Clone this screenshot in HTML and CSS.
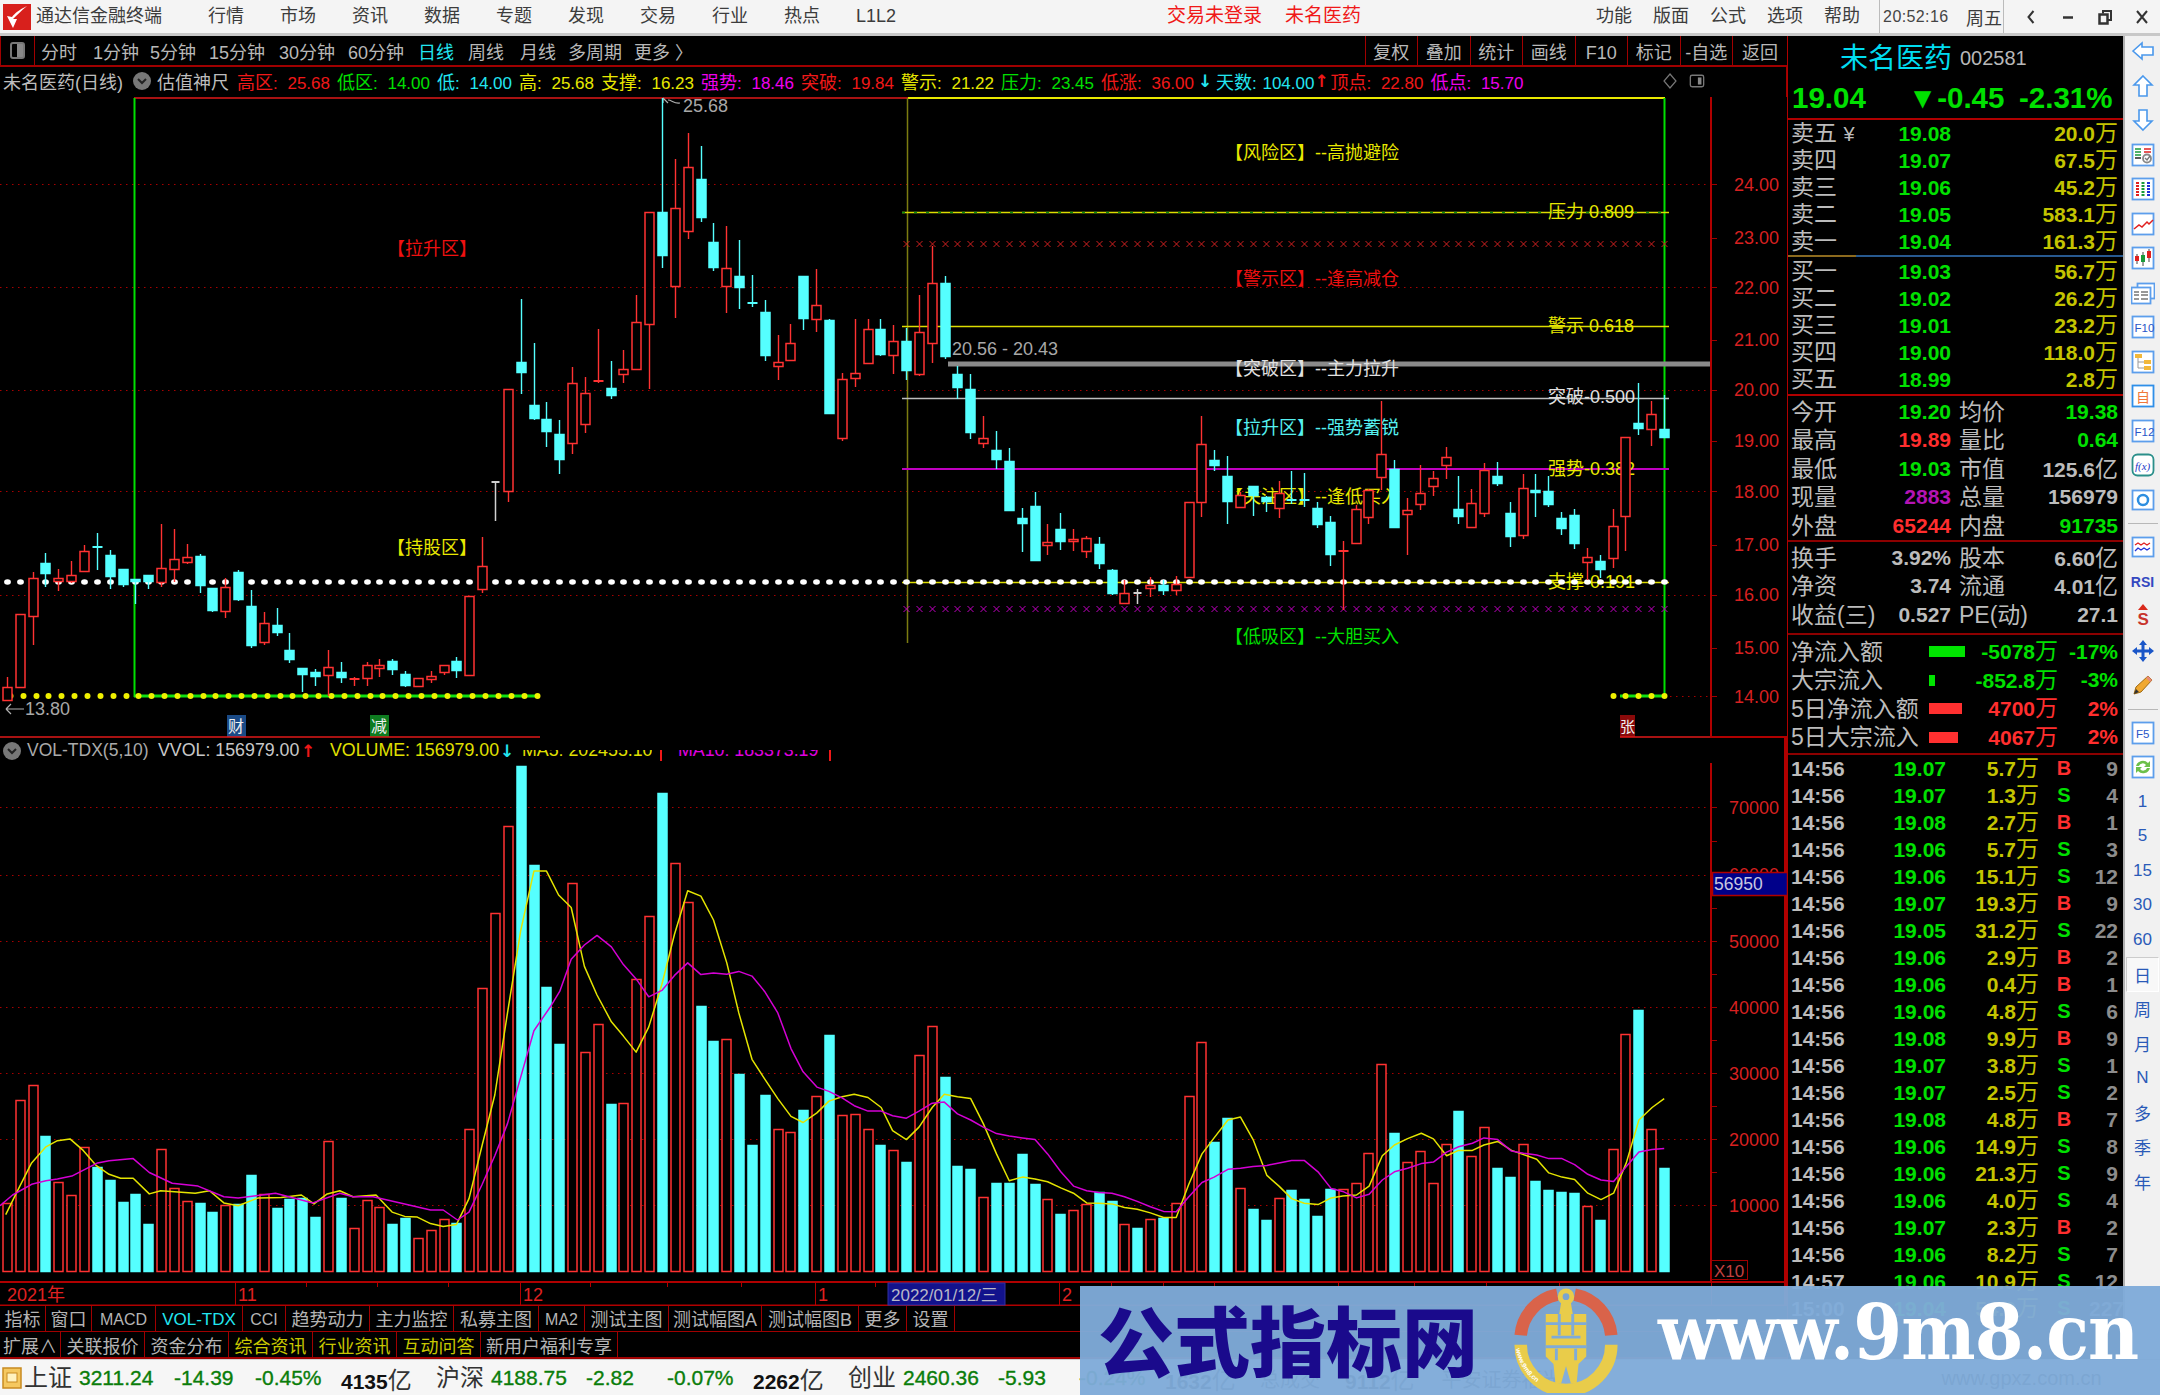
FILE: index.html
```html
<!DOCTYPE html>
<html lang="zh-CN">
<head>
<meta charset="utf-8">
<title>通达信金融终端</title>
<link rel="stylesheet" href="styles.css">
</head>
<body>
<div class="app">
  <header class="titlebar">
    <svg class="logo" viewBox="0 0 28 26"><rect width="28" height="26" fill="#d8201c"/><path d="M24 2 C16 6 12 9 9 13 L4 12 L10 24 L14 15 L10 15 C14 11 18 7 24 2Z" fill="#fff"/></svg>
    <span class="app-name">通达信金融终端</span>
    <nav class="menu">
      <span>行情</span><span>市场</span><span>资讯</span><span>数据</span><span>专题</span><span>发现</span><span>交易</span><span>行业</span><span>热点</span><span>L1L2</span>
    </nav>
    <span class="alert alert-first">交易未登录</span>
    <span class="alert alert-second">未名医药</span>
    <nav class="menu menu-right">
      <span>功能</span><span>版面</span><span>公式</span><span>选项</span><span>帮助</span>
    </nav>
    <div class="clock"><span class="clock-time">20:52:16</span><span>周五</span></div>
    <div class="winctl">
      <svg viewBox="0 0 16 16"><path d="M10.5 2 L5.5 8 L10.5 14" fill="none" stroke="#333" stroke-width="2"/></svg>
      <svg viewBox="0 0 16 16"><path d="M3 8.5 H13" stroke="#333" stroke-width="2.5"/></svg>
      <svg viewBox="0 0 16 16"><path d="M6 4.5 V2 H14 V11 H11" fill="none" stroke="#333" stroke-width="2"/><rect x="2.5" y="5.5" width="8" height="9" fill="none" stroke="#333" stroke-width="2.5"/></svg>
      <svg viewBox="0 0 16 16"><path d="M3 2 L13 14 M13 2 L3 14" stroke="#333" stroke-width="2"/></svg>
    </div>
  </header>

  <div class="workspace">
    <main class="chartcol">
      <div class="toolbar">
        <div class="tb-toggle"><span></span></div>
        <div class="periods">
          <span>分时</span><span>1分钟</span><span>5分钟</span><span>15分钟</span><span>30分钟</span><span>60分钟</span><span class="active">日线</span><span>周线</span><span>月线</span><span>多周期</span><span>更多 〉</span>
        </div>
        <div class="tb-buttons">
          <span>复权</span><span>叠加</span><span>统计</span><span>画线</span><span>F10</span><span>标记</span><span>-自选</span><span>返回</span>
        </div>
      </div>

      <div class="inforow">
        <span class="info-title">未名医药(日线)</span>
        <svg class="chev" viewBox="0 0 18 18"><circle cx="9" cy="9" r="9" fill="#777"/><path d="M5 7 L9 11 L13 7" fill="none" stroke="#222" stroke-width="2"/></svg>
        <span class="info-title info-second">估值神尺</span>
        <span class="stat s-red">高区<i>: 25.68</i></span>
        <span class="stat s-green">低区<i>: 14.00</i></span>
        <span class="stat s-cyan">低<i>: 14.00</i></span>
        <span class="stat s-yellow">高<i>: 25.68</i></span>
        <span class="stat s-yellow">支撑<i>: 16.23</i></span>
        <span class="stat s-magenta">强势<i>: 18.46</i></span>
        <span class="stat s-red">突破<i>: 19.84</i></span>
        <span class="stat s-yellow">警示<i>: 21.22</i></span>
        <span class="stat s-green">压力<i>: 23.45</i></span>
        <span class="stat s-red">低涨<i>: 36.00</i></span>
        <b class="arrow s-cyan">↓</b>
        <span class="stat stat-tight s-cyan">天数<i>: 104.00</i></span>
        <b class="arrow arrow-tight s-red">↑</b>
        <span class="stat s-red">顶点<i>: 22.80</i></span>
        <span class="stat s-magenta">低点<i>: 15.70</i></span>
        <div class="info-tools">
          <svg viewBox="0 0 14 18"><path d="M7 2 L13 9 L7 16 L1 9Z" fill="none" stroke="#777" stroke-width="1.2"/></svg>
          <svg viewBox="0 0 18 18"><rect x="1.5" y="2.5" width="15" height="13" rx="2" fill="none" stroke="#777" stroke-width="1.5"/><rect x="10" y="5" width="4" height="8" fill="#888"/></svg>
        </div>
      </div>

      <svg class="pricechart" viewBox="0 97 1787 641">
        <g class="grid">
          <line x1="0" x2="1711" y1="184.5" y2="184.5"/>
          <line x1="0" x2="1711" y1="287.5" y2="287.5"/>
          <line x1="0" x2="1711" y1="390.5" y2="390.5"/>
          <line x1="0" x2="1711" y1="491.5" y2="491.5"/>
          <line x1="0" x2="1711" y1="595.5" y2="595.5"/>
          <line x1="1664" x2="1711" y1="696.5" y2="696.5"/>
        </g>
        <g class="frames">
          <line class="l-red" x1="134" x2="908" y1="98" y2="98"/>
          <line class="l-yellow2" x1="908" x2="1665" y1="98" y2="98"/>
          <line class="l-green" x1="134.5" x2="134.5" y1="98" y2="697"/>
          <line class="l-green" x1="1664.5" x2="1664.5" y1="98" y2="697"/>
          <line class="l-olive" x1="907.5" x2="907.5" y1="98" y2="643"/>
          <line class="l-yellow" x1="902" x2="1669" y1="212.5" y2="212.5"/>
          <line class="l-greendash" x1="902" x2="1669" y1="212.5" y2="212.5"/>
          <line class="l-yellow" x1="902" x2="1669" y1="326.5" y2="326.5"/>
          <line class="l-gray" x1="948" x2="1711" y1="364" y2="364"/>
          <line class="l-lightgray" x1="902" x2="1669" y1="398.5" y2="398.5"/>
          <line class="l-magenta" x1="902" x2="1669" y1="469" y2="469"/>
          <line class="l-yellow" x1="902" x2="1669" y1="582.5" y2="582.5"/>
          <line class="l-thickgreen" x1="134" x2="540" y1="696" y2="696"/>
          <line class="l-thickgreen" x1="1620" x2="1664" y1="696" y2="696"/>
        </g>
        <g id="xmarks"></g>
        <g class="labels">
          <text class="lab c-red" x="387" y="255">【拉升区】</text>
          <text class="lab c-yellow" x="387" y="554">【持股区】</text>
          <text class="lab c-yellow" x="1225" y="159">【风险区】--高抛避险</text>
          <text class="lab c-red" x="1225" y="285">【警示区】--逢高减仓</text>
          <text class="lab c-white" x="1225" y="375">【突破区】--主力拉升</text>
          <text class="lab c-cyan" x="1225" y="434">【拉升区】--强势蓄锐</text>
          <text class="lab c-yellow" x="1225" y="503">【关注区】--逢低买入</text>
          <text class="lab c-green" x="1225" y="643">【低吸区】--大胆买入</text>
          <text class="lab c-yellow" x="1548" y="218">压力 0.809</text>
          <text class="lab c-yellow" x="1548" y="332">警示 0.618</text>
          <text class="lab c-white" x="1548" y="403">突破-0.500</text>
          <text class="lab c-yellow" x="1548" y="475">强势-0.382</text>
          <text class="lab c-yellow" x="1548" y="588">支撑-0.191</text>
          <text class="lab c-gray" x="952" y="355">20.56 - 20.43</text>
          <text class="lab c-gray" x="683" y="112">25.68</text>
          <text class="lab c-gray" x="25" y="715">13.80</text>
        </g>
        <path class="pointer" d="M663 98 V103 M663 98 L668 103 M668 100 C672 100 674 104 680 103"/>
        <path class="pointer" d="M6 709 H24 M6 709 L11 704 M6 709 L11 714"/>
        <g id="dots"></g>
        <g id="candles"></g>
        <g class="tags">
          <rect class="tag-blue" x="227" y="715" width="19" height="22"/>
          <text class="tagtext" x="228" y="732">财</text>
          <rect class="tag-green" x="370" y="715" width="19" height="22"/>
          <text class="tagtext" x="371" y="732">减</text>
          <rect class="tag-red" x="1620" y="715" width="15" height="22"/>
          <text class="tagtext tag-narrow" x="1620" y="732">张</text>
        </g>
        <line class="l-red" x1="0" x2="540" y1="737" y2="737"/>
        <line class="l-red" x1="1620" x2="1711" y1="737" y2="737"/>
        <line class="axis" x1="1711" x2="1787" y1="737" y2="737"/>
        <line class="axis" x1="1711" x2="1711" y1="97" y2="738"/>
        <g class="ticks">
          <path d="M1712 184.5h5M1712 238.5h5M1712 287.5h5M1712 340.5h5M1712 390.5h5M1712 441.5h5M1712 491.5h5M1712 545.5h5M1712 595.5h5M1712 648.5h5M1712 696.5h5"/>
        </g>
        <g class="axis-labels">
          <text x="1779" y="191">24.00</text><text x="1779" y="244">23.00</text><text x="1779" y="294">22.00</text><text x="1779" y="346">21.00</text><text x="1779" y="396">20.00</text><text x="1779" y="447">19.00</text><text x="1779" y="498">18.00</text><text x="1779" y="551">17.00</text><text x="1779" y="601">16.00</text><text x="1779" y="654">15.00</text><text x="1779" y="703">14.00</text>
        </g>
      </svg>

      <div class="volhead">
        <svg class="chev" viewBox="0 0 18 18"><circle cx="9" cy="9" r="9" fill="#777"/><path d="M5 7 L9 11 L13 7" fill="none" stroke="#222" stroke-width="2"/></svg>
        <span class="vh-a">VOL-TDX(5,10)</span>
        <span class="vh-b">VVOL: 156979.00</span>
        <b class="arrow s-red">↑</b>
        <span class="vh-c">VOLUME: 156979.00</span>
        <b class="arrow s-cyan">↓</b>
        <span class="vh-d">MA5: 202455.10</span>
        <span class="vh-bar"></span>
        <span class="vh-e">MA10: 183373.19</span>
        <span class="vh-bar"></span>
      </div>

      <svg class="volchart" viewBox="0 763 1787 543">
        <g class="grid">
          <line x1="0" x2="1711" y1="807.5" y2="807.5"/>
          <line x1="0" x2="1711" y1="875.5" y2="875.5"/>
          <line x1="0" x2="1711" y1="941.5" y2="941.5"/>
          <line x1="0" x2="1711" y1="1007.5" y2="1007.5"/>
          <line x1="0" x2="1711" y1="1073.5" y2="1073.5"/>
          <line x1="0" x2="1711" y1="1139.5" y2="1139.5"/>
          <line x1="0" x2="1711" y1="1205.5" y2="1205.5"/>
        </g>
        <g id="bars"></g>
        <polyline id="ma5" class="ma ma5"/>
        <polyline id="ma10" class="ma ma10"/>
        <line class="axis" x1="1711" x2="1711" y1="763" y2="1282"/>
        <line class="axis-thick" x1="1785.5" x2="1785.5" y1="763" y2="1306"/>
        <g class="ticks">
          <path d="M1712 807.5h5M1712 841.5h5M1712 875.5h5M1712 908.5h5M1712 941.5h5M1712 974.5h5M1712 1007.5h5M1712 1040.5h5M1712 1073.5h5M1712 1106.5h5M1712 1139.5h5M1712 1172.5h5M1712 1205.5h5"/>
        </g>
        <g class="axis-labels">
          <text x="1779" y="814">70000</text><text x="1779" y="881">60000</text><text x="1779" y="948">50000</text><text x="1779" y="1014">40000</text><text x="1779" y="1080">30000</text><text x="1779" y="1146">20000</text><text x="1779" y="1212">10000</text>
        </g>
        <rect class="hover-box" x="1712.5" y="872.5" width="75" height="23"/>
        <text class="hover-text" x="1714" y="890">56950</text>
        <rect class="x10-box" x="1711.5" y="1260.5" width="36" height="19"/>
        <text class="x10-text" x="1714" y="1277">X10</text>
        <line class="axis" x1="0" x2="1787" y1="1282" y2="1282"/>
        <line class="axis" x1="0" x2="1787" y1="1305.5" y2="1305.5"/>
        <path class="date-ticks" d="M235.5 1282V1305M520.5 1282V1305M815.5 1282V1305M1059.5 1282V1305M1711.5 1282V1305M306.5 1282v5M377.5 1282v5M448.5 1282v5M590.5 1282v5M667.5 1282v5M741.5 1282v5M875.5 1282v5M1111.5 1282v5M1163.5 1282v5M1214.5 1282v5M1338.5 1282v5M1414.5 1282v5M1486.5 1282v5M1559.5 1282v5"/>
        <rect class="date-box" x="888" y="1283" width="117" height="22"/>
        <text class="date-red" x="7" y="1301">2021年</text>
        <text class="date-red" x="238" y="1301">11</text>
        <text class="date-red" x="523" y="1301">12</text>
        <text class="date-red" x="818" y="1301">1</text>
        <text class="date-gray" x="891" y="1301">2022/01/12/三</text>
        <text class="date-red" x="1062" y="1301">2</text>
      </svg>

      <div class="tabs tabs-one">
        <span class="w46">指标</span><span class="w46">窗口</span><span class="w64 lat">MACD</span><span class="w87 lat cyan">VOL-TDX</span><span class="w43 lat">CCI</span><span class="w84">趋势动力</span><span class="w84">主力监控</span><span class="w85">私募主图</span><span class="w46 lat">MA2</span><span class="w84">测试主图</span><span class="w93">测试幅图A</span><span class="w97">测试幅图B</span><span class="w48">更多</span><span class="w48">设置</span>
      </div>
      <div class="tabs tabs-two">
        <span class="w61">扩展∧</span><span class="w84">关联报价</span><span class="w84">资金分布</span><span class="w84 gold">综合资讯</span><span class="w84 gold">行业资讯</span><span class="w84 gold">互动问答</span><span class="w137">新用户福利专享</span>
      </div>
    </main>

    <aside class="quote">
      <div class="q-head">
        <div class="q-name"><span class="q-title">未名医药</span><span class="q-code">002581</span></div>
        <div class="q-price"><span class="qp-last">19.04</span><span class="qp-chg">▼-0.45</span><span class="qp-pct">-2.31%</span></div>
      </div>

      <div class="book">
        <div class="b-row"><span>卖五 <small>¥</small></span><b class="up">19.08</b><b class="vol">20.0<em>万</em></b></div>
        <div class="b-row"><span>卖四</span><b class="up">19.07</b><b class="vol">67.5<em>万</em></b></div>
        <div class="b-row"><span>卖三</span><b class="up">19.06</b><b class="vol">45.2<em>万</em></b></div>
        <div class="b-row"><span>卖二</span><b class="up">19.05</b><b class="vol">583.1<em>万</em></b></div>
        <div class="b-row"><span>卖一</span><b class="up">19.04</b><b class="vol">161.3<em>万</em></b></div>
      </div>
      <div class="midline"></div>
      <div class="book book-buy">
        <div class="b-row"><span>买一</span><b class="up">19.03</b><b class="vol">56.7<em>万</em></b></div>
        <div class="b-row"><span>买二</span><b class="up">19.02</b><b class="vol">26.2<em>万</em></b></div>
        <div class="b-row"><span>买三</span><b class="up">19.01</b><b class="vol">23.2<em>万</em></b></div>
        <div class="b-row"><span>买四</span><b class="up">19.00</b><b class="vol">118.0<em>万</em></b></div>
        <div class="b-row"><span>买五</span><b class="up">18.99</b><b class="vol">2.8<em>万</em></b></div>
      </div>

      <div class="stats stats-a">
        <div class="s-row"><span>今开</span><b class="up">19.20</b><span class="s2">均价</span><b class="up">19.38</b></div>
        <div class="s-row"><span>最高</span><b class="down">19.89</b><span class="s2">量比</span><b class="up">0.64</b></div>
        <div class="s-row"><span>最低</span><b class="up">19.03</b><span class="s2">市值</span><b class="gray">125.6<em>亿</em></b></div>
        <div class="s-row"><span>现量</span><b class="purple">2883</b><span class="s2">总量</span><b class="gray">156979</b></div>
        <div class="s-row"><span>外盘</span><b class="down">65244</b><span class="s2">内盘</span><b class="up">91735</b></div>
      </div>
      <div class="stats stats-b">
        <div class="s-row"><span>换手</span><b class="gray">3.92%</b><span class="s2">股本</span><b class="gray">6.60<em>亿</em></b></div>
        <div class="s-row"><span>净资</span><b class="gray">3.74</b><span class="s2">流通</span><b class="gray">4.01<em>亿</em></b></div>
        <div class="s-row"><span>收益(三)</span><b class="gray">0.527</b><span class="s2">PE(动)</span><b class="gray">27.1</b></div>
      </div>

      <div class="flows">
        <div class="f-row"><span>净流入额</span><i class="fbar fb-g36"></i><b class="up">-5078<em>万</em></b><b class="up">-17%</b></div>
        <div class="f-row"><span>大宗流入</span><i class="fbar fb-g6"></i><b class="up">-852.8<em>万</em></b><b class="up">-3%</b></div>
        <div class="f-row"><span>5日净流入额</span><i class="fbar fb-r33"></i><b class="down">4700<em>万</em></b><b class="down">2%</b></div>
        <div class="f-row"><span>5日大宗流入</span><i class="fbar fb-r29"></i><b class="down">4067<em>万</em></b><b class="down">2%</b></div>
      </div>

      <div class="trades">
        <div class="t-row"><b class="gray">14:56</b><b class="up">19.07</b><b class="vol">5.7<em>万</em></b><b class="down">B</b><b class="dim">9</b></div>
        <div class="t-row"><b class="gray">14:56</b><b class="up">19.07</b><b class="vol">1.3<em>万</em></b><b class="up">S</b><b class="dim">4</b></div>
        <div class="t-row"><b class="gray">14:56</b><b class="up">19.08</b><b class="vol">2.7<em>万</em></b><b class="down">B</b><b class="dim">1</b></div>
        <div class="t-row"><b class="gray">14:56</b><b class="up">19.06</b><b class="vol">5.7<em>万</em></b><b class="up">S</b><b class="dim">3</b></div>
        <div class="t-row"><b class="gray">14:56</b><b class="up">19.06</b><b class="vol">15.1<em>万</em></b><b class="up">S</b><b class="dim">12</b></div>
        <div class="t-row"><b class="gray">14:56</b><b class="up">19.07</b><b class="vol">19.3<em>万</em></b><b class="down">B</b><b class="dim">9</b></div>
        <div class="t-row"><b class="gray">14:56</b><b class="up">19.05</b><b class="vol">31.2<em>万</em></b><b class="up">S</b><b class="dim">22</b></div>
        <div class="t-row"><b class="gray">14:56</b><b class="up">19.06</b><b class="vol">2.9<em>万</em></b><b class="down">B</b><b class="dim">2</b></div>
        <div class="t-row"><b class="gray">14:56</b><b class="up">19.06</b><b class="vol">0.4<em>万</em></b><b class="down">B</b><b class="dim">1</b></div>
        <div class="t-row"><b class="gray">14:56</b><b class="up">19.06</b><b class="vol">4.8<em>万</em></b><b class="up">S</b><b class="dim">6</b></div>
        <div class="t-row"><b class="gray">14:56</b><b class="up">19.08</b><b class="vol">9.9<em>万</em></b><b class="down">B</b><b class="dim">9</b></div>
        <div class="t-row"><b class="gray">14:56</b><b class="up">19.07</b><b class="vol">3.8<em>万</em></b><b class="up">S</b><b class="dim">1</b></div>
        <div class="t-row"><b class="gray">14:56</b><b class="up">19.07</b><b class="vol">2.5<em>万</em></b><b class="up">S</b><b class="dim">2</b></div>
        <div class="t-row"><b class="gray">14:56</b><b class="up">19.08</b><b class="vol">4.8<em>万</em></b><b class="down">B</b><b class="dim">7</b></div>
        <div class="t-row"><b class="gray">14:56</b><b class="up">19.06</b><b class="vol">14.9<em>万</em></b><b class="up">S</b><b class="dim">8</b></div>
        <div class="t-row"><b class="gray">14:56</b><b class="up">19.06</b><b class="vol">21.3<em>万</em></b><b class="up">S</b><b class="dim">9</b></div>
        <div class="t-row"><b class="gray">14:56</b><b class="up">19.06</b><b class="vol">4.0<em>万</em></b><b class="up">S</b><b class="dim">4</b></div>
        <div class="t-row"><b class="gray">14:56</b><b class="up">19.07</b><b class="vol">2.3<em>万</em></b><b class="down">B</b><b class="dim">2</b></div>
        <div class="t-row"><b class="gray">14:56</b><b class="up">19.06</b><b class="vol">8.2<em>万</em></b><b class="up">S</b><b class="dim">7</b></div>
        <div class="t-row"><b class="gray">14:57</b><b class="up">19.06</b><b class="vol">10.9<em>万</em></b><b class="up">S</b><b class="dim">12</b></div>
        <div class="t-row"><b class="gray">15:00</b><b class="up">19.04</b><b class="vol">54.9<em>万</em></b><b class="up">S</b><b class="dim">227</b></div>
      </div>
    </aside>

    <aside class="sidetools">
      <div class="st"><svg viewBox="0 0 24 24"><polygon class="arr" points="2,12 11,4 11,8 22,8 22,16 11,16 11,20"/></svg></div>
      <div class="st"><svg viewBox="0 0 24 24"><polygon class="arr" points="12,2 21,11 16,11 16,22 8,22 8,11 3,11"/></svg></div>
      <div class="st"><svg viewBox="0 0 24 24"><polygon class="arr" points="12,22 21,13 16,13 16,2 8,2 8,13 3,13"/></svg></div>
      <div class="st"><svg viewBox="0 0 24 24"><rect class="box" x="1.5" y="1.5" width="21" height="21"/><path d="M4 6h6M4 9h6M4 12h6" stroke="#1a9a3a" stroke-width="1.6"/><path d="M13 6h7M13 9h7" stroke="#e02020" stroke-width="1.6"/><path d="M4 15h6" stroke="#333" stroke-width="1.6"/><circle cx="16" cy="15.5" r="4" fill="none" stroke="#888" stroke-width="1.8"/><path d="M14 15l2 2 3-4" fill="none" stroke="#777" stroke-width="1.4"/></svg></div>
      <div class="st"><svg viewBox="0 0 24 24"><rect class="box" x="1.5" y="1.5" width="21" height="21"/><path d="M5 6h3M5 9h3M5 12h3M5 15h3M5 18h3" stroke="#e02020" stroke-width="1.8"/><path d="M10.5 6h3M10.5 9h3M10.5 12h3M10.5 15h3M10.5 18h3" stroke="#1a9a3a" stroke-width="1.8"/><path d="M16 6h3M16 9h3M16 12h3M16 15h3M16 18h3" stroke="#2030d8" stroke-width="1.8"/></svg></div>
      <div class="st"><svg viewBox="0 0 24 24"><rect class="box" x="1.5" y="1.5" width="21" height="21"/><path d="M3 17 L8 13 L11 15 L16 10 L18 12 L22 8" fill="none" stroke="#e02020" stroke-width="1.5"/></svg></div>
      <div class="st"><svg viewBox="0 0 24 24"><rect class="box" x="1.5" y="1.5" width="21" height="21"/><path d="M6 8v10M12 6v14M18 3v13" stroke="#444" stroke-width="1"/><rect x="4" y="10" width="4" height="5" fill="#e02020"/><rect x="10" y="9" width="4" height="7" fill="#1a9a3a"/><rect x="16" y="5" width="4" height="7" fill="#e02020"/></svg></div>
      <div class="st"><svg viewBox="0 0 24 24"><rect class="box" x="6.5" y="2.5" width="17" height="15"/><rect class="box" x="0.5" y="6.5" width="19" height="16"/><path d="M3 11h5M3 14h5M3 18h5M10 11h7M10 14h7M10 18h7" stroke="#777" stroke-width="1.5"/></svg></div>
      <div class="st"><svg viewBox="0 0 24 24"><rect class="box" x="1.5" y="1.5" width="21" height="21"/><text class="st-f" x="3.500" y="17">F10</text></svg></div>
      <div class="st"><svg viewBox="0 0 24 24"><rect class="box" x="1.5" y="1.5" width="21" height="21"/><path d="M7 8V18H13M7 12H13" fill="none" stroke="#999" stroke-width="1"/><rect x="4" y="4" width="7" height="4" fill="#f2b83a"/><rect x="13" y="10" width="7" height="4" fill="#f2b83a"/><rect x="13" y="16" width="7" height="4" fill="#f2b83a"/></svg></div>
      <div class="st"><svg viewBox="0 0 24 24"><rect class="box box-strong" x="1.5" y="1.5" width="21" height="21"/><text class="st-zi" x="5" y="17.500">自</text></svg></div>
      <div class="st"><svg viewBox="0 0 24 24"><rect class="box" x="1.5" y="1.5" width="21" height="21"/><text class="st-f" x="3.500" y="17">F12</text></svg></div>
      <div class="st"><svg viewBox="0 0 24 24"><rect class="box-teal" x="1.5" y="1.5" width="21" height="21" rx="5"/><text class="st-fx" x="4" y="16.500">f(x)</text></svg></div>
      <div class="st"><svg viewBox="0 0 24 24"><rect class="box" x="1.5" y="2.5" width="21" height="19"/><circle cx="12" cy="12" r="5" fill="none" stroke="#2d8ee0" stroke-width="2.5"/></svg></div>
      <div class="st-sep"></div>
      <div class="st"><svg viewBox="0 0 24 24"><rect class="box" x="1.5" y="2.5" width="21" height="19"/><path d="M4 10l3-2 3 2 3-2 3 2 3-2" fill="none" stroke="#e02020" stroke-width="1.3"/><path d="M4 16l3-3 3 2 3-2 3 2 3-2" fill="none" stroke="#2030d8" stroke-width="1.3"/></svg></div>
      <div class="st"><span class="st-rsi">RSI</span></div>
      <div class="st"><svg viewBox="0 0 24 24"><path d="M12 0 L17 6 H7Z" fill="#d92a1c"/><text class="st-s" x="6.500" y="21">S</text></svg></div>
      <div class="st"><svg viewBox="0 0 24 24"><path d="M12 1l4 5h-2.500v4.500H18V8l5 4-5 4v-2.500h-4.500V18H16l-4 5-4-5h2.500v-4.500H6V16l-5-4 5-4v2.500h4.500V6H8z" fill="#1a56c8"/></svg></div>
      <div class="st"><svg viewBox="0 0 24 24"><path d="M3 21 L5 14 L17 3 L21 7 L10 19Z" fill="#f0a830" stroke="#a06a10" stroke-width="1"/><path d="M17 3 L21 7 L19 9 L15 5Z" fill="#e88a7a"/><path d="M3 21 L5 16 L8 19Z" fill="#333"/></svg></div>
      <div class="st-sep"></div>
      <div class="st"><svg viewBox="0 0 24 24"><rect class="box" x="1.5" y="1.5" width="21" height="21"/><text class="st-f" x="5" y="17">F5</text></svg></div>
      <div class="st"><svg viewBox="0 0 24 24"><rect class="box" x="1.5" y="1.5" width="21" height="21"/><path d="M5 11a7 7 0 0 1 12-3l2-2v6h-6l2-2a4 4 0 0 0-7 1zM19 13a7 7 0 0 1-12 3l-2 2v-6h6l-2 2a4 4 0 0 0 7-1z" fill="#6cc04a"/></svg></div>
      <div class="st st-txt">1</div>
      <div class="st st-txt">5</div>
      <div class="st st-txt">15</div>
      <div class="st st-txt">30</div>
      <div class="st st-txt">60</div>
      <div class="st st-txt st-on">日</div>
      <div class="st st-txt">周</div>
      <div class="st st-txt">月</div>
      <div class="st st-txt">N</div>
      <div class="st st-txt">多</div>
      <div class="st st-txt">季</div>
      <div class="st st-txt">年</div>
    </aside>
  </div>

  <footer class="statusbar">
    <svg class="sb-icon" viewBox="0 0 20 24"><rect x="1" y="2" width="18" height="20" fill="#f5c860" stroke="#c88a20" stroke-width="1.5"/><rect x="5" y="7" width="10" height="9" fill="#fff2c0" stroke="#c88a20"/></svg>
    <div class="idx"><span>上证</span><b>3211.24</b><b>-14.39</b><b>-0.45%</b><strong>4135<em>亿</em></strong></div>
    <div class="idx"><span>沪深</span><b>4188.75</b><b>-2.82</b><b>-0.07%</b><strong>2262<em>亿</em></strong></div>
    <div class="idx"><span>创业</span><b>2460.36</b><b>-5.93</b><b>-0.24%</b><strong>1632<em>亿</em></strong></div>
    <div class="sb-tail"><span>总成交</span><strong>9112<em>亿</em></strong><span class="sb-broker">平安证券福光</span><span class="sb-site">www.gpxz.com.cn</span></div>
  </footer>

  <aside class="banner">
    <span class="banner-cn">公式指标网</span>
    <svg class="banner-logo" viewBox="0 0 110 110">
      <path d="M8 50 A47 47 0 0 1 46 8 M64 8 A47 47 0 0 1 102 50" fill="none" stroke="#d9634a" stroke-width="13"/>
      <path d="M8 60 A47 47 0 0 0 102 60" fill="none" stroke="#e9cc4a" stroke-width="13"/>
      <circle cx="55" cy="10" r="6" fill="none" stroke="#e9cc4a" stroke-width="5"/>
      <path d="M50 16 H60 L62 28 H76 V72 L68 80 L66 100 L60 100 L55 82 L50 100 L44 100 L42 80 L34 72 V28 H48Z" fill="#e9cc4a"/>
      <path d="M34 38 H76 M40 52 H70 M34 62 H76 M48 28 V50 M62 28 V50 M45 64 V76 M65 64 V76" stroke="#7fabd8" stroke-width="3" fill="none"/>
      <path id="logoarc" d="M3 64 A52 52 0 0 0 50 108" fill="none"/>
      <text class="banner-arc"><textPath href="#logoarc">www.9m8.cn</textPath></text>
    </svg>
    <span class="banner-url">www.9m8.cn</span>
  </aside>
</div>
<script src="script.js"></script>
</body>
</html>
```

FILE: styles.css
```css
* { box-sizing: border-box; }
html, body { margin: 0; padding: 0; background: #000; }
body {
  width: 2160px;
  height: 1395px;
  overflow: hidden;
  font-family: "Liberation Sans", "Noto Sans CJK SC", sans-serif;
  font-size: 18px;
}
i, em { font-style: normal; }
svg { display: block; }

.app { position: relative; width: 2160px; height: 1395px; display: flex; flex-direction: column; }

/* title bar */
.titlebar {
  height: 36px;
  flex: none;
  display: flex;
  align-items: center;
  background: #f4f4f4;
  border-bottom: 3px solid #c8c8c8;
  color: #3c3c3c;
}
.logo { width: 28px; height: 26px; margin-left: 3px; flex: none; }
.app-name { width: 172px; margin-left: 5px; flex: none; font-size: 18px; line-height: 26px; margin-bottom: 1px; }
.menu { display: flex; gap: 36px; align-items: center; line-height: 26px; margin-bottom: 1px; }
.menu span { min-width: 36px; }
.alert { color: #f01818; font-size: 19px; line-height: 26px; margin-bottom: 1px; }
.alert-first { margin-left: 271px; }
.alert-second { margin-left: 23px; }
.menu-right { margin-left: 235px; gap: 21px; }
.clock {
  display: flex;
  align-items: center;
  height: 33px;
  margin-left: 19px;
  width: 125px;
  padding-left: 3px;
  border-left: 1px solid #bbb;
  border-right: 1px solid #bbb;
}
.clock-time { font-size: 16px; color: #444; width: 83px; letter-spacing: .4px; }
.winctl { display: flex; margin-left: 19px; gap: 21px; }
.winctl svg { width: 16px; height: 16px; }

.workspace { display: flex; height: 1323px; flex: none; }

/* left column */
.chartcol { width: 1787px; flex: none; display: flex; flex-direction: column; background: #000; }

.toolbar {
  height: 31px;
  flex: none;
  display: flex;
  border-bottom: 2px solid #a00000;
  color: #b8b8b8;
  line-height: 34px;
}
.tb-toggle { width: 35px; border-right: 1px solid #a00000; border-left: 1px solid #a00000; display: flex; align-items: center; justify-content: center; }
.tb-toggle span { width: 15px; height: 17px; border: 2px solid #777; border-radius: 3px; background: linear-gradient(90deg, #000 50%, #888 50%); }
.periods { display: flex; margin-left: 6px; gap: 0; }
.periods span:nth-child(1) { width: 52px; }
.periods span:nth-child(2) { width: 57px; }
.periods span:nth-child(3) { width: 59px; }
.periods span:nth-child(4) { width: 70px; }
.periods span:nth-child(5) { width: 69px; }
.periods span:nth-child(6) { width: 70px; }
.periods span:nth-child(7) { width: 50px; }
.periods span:nth-child(8) { width: 52px; }
.periods span:nth-child(9) { width: 48px; }
.periods span:nth-child(10) { width: 66px; }
.periods .active { color: #22e6f0; }
.tb-buttons { display: flex; margin-left: auto; }
.tb-buttons span { width: 52.500px; text-align: center; border-left: 1px solid #a00000; }
.tb-buttons span:last-child { width: 55px; }

.inforow {
  height: 30px;
  flex: none;
  display: flex;
  align-items: center;
  padding: 0 0 2px 3px;
  white-space: nowrap;
  position: relative;
  color: #bdbdbd;
  border-right: 1px solid #a00000;
}
.info-title { color: #bdbdbd; }
.info-second { margin-right: 1px; }
.chev { width: 18px; height: 18px; flex: none; margin: 0 6px 0 10px; }
.stat { margin-left: 7px; }
.stat i { font-size: 17px; word-spacing: 5px; }
.stat-tight i { word-spacing: 1px; }
.arrow { font: 700 17px "DejaVu Sans", sans-serif; width: 12px; text-align: center; flex: none; }
.s-red { color: #f01818; }
.s-green { color: #00e000; }
.s-cyan { color: #22e6f0; }
.s-yellow { color: #e8e800; }
.s-magenta { color: #ee00ee; }
.inforow .arrow { margin-left: 4px; }
.inforow .arrow + .stat { margin-left: 6px; }
.inforow .arrow-tight { margin-left: 0; }
.inforow .arrow-tight + .stat { margin-left: 4px; }
.info-tools { position: absolute; left: 1662px; top: 5px; display: flex; gap: 11px; width: 49px; }
.info-tools svg { width: 16px; height: 18px; flex: none; }

.pricechart { width: 1787px; height: 641px; flex: none; }

.volhead {
  height: 25px;
  flex: none;
  display: flex;
  align-items: center;
  white-space: nowrap;
  border-right: 3px solid #b00000;
}
.volhead .chev { margin: 0 6px 0 3px; }
.vh-a { color: #aaa; width: 131px; font-size: 17.500px; }
.vh-b { color: #c8c8c8; font-size: 17.800px; width: 143px; }
.vh-c { color: #e0e000; margin-left: 17px; font-size: 17.800px; width: 170px; }
.vh-d { color: #e0e000; margin-left: 10px; font-size: 17.800px; width: 130px; clip-path: inset(48% 0 0 0); }
.vh-e { color: #e000e0; margin-left: 16px; font-size: 17.800px; width: 143px; clip-path: inset(48% 0 0 0); }
.vh-bar { width: 2px; height: 11px; background: #f01818; margin: 10px 0 0 8px; flex: none; }

.volchart { width: 1787px; height: 543px; flex: none; }

.tabs { display: flex; flex: none; color: #b4b4b4; white-space: nowrap; border-bottom: 1px solid #a00000; }
.tabs-one { height: 26px; line-height: 28px; }
.tabs-two { height: 27px; border-bottom-width: 2px; line-height: 30px; }
.tabs span { text-align: center; border-right: 1px solid #a00000; flex: none; height: 100%; overflow: visible; }
.tabs .lat { font-size: 16px; }
.tabs .cyan { color: #22e6f0; font-size: 17px; }
.tabs .gold { color: #c8c800; }
.w43 { width: 43px; } .w46 { width: 46px; } .w48 { width: 48px; } .w61 { width: 61px; }
.w64 { width: 64px; } .w84 { width: 84px; } .w85 { width: 85px; } .w87 { width: 87px; }
.w93 { width: 93px; } .w97 { width: 97px; } .w137 { width: 137px; }

/* quote panel */
.quote { width: 336px; flex: none; background: #000; color: #bcbcbc; border-left: 1px solid #b00000; font-size: 23px; overflow: hidden; }
.quote b { font-weight: 700; font-size: 21px; white-space: nowrap; text-align: right; }
.quote em { font-weight: 400; font-size: 23px; }
.q-head { height: 84px; border-bottom: 2px solid #b00000; }
.q-name { height: 45px; display: flex; align-items: center; padding-left: 52px; }
.q-title { font-size: 28px; color: #00dcf0; width: 120px; line-height: 40px; }
.q-code { font-size: 20px; color: #b8b8b8; }
.q-price { display: flex; align-items: center; height: 34px; font-weight: 700; color: #00e000; font-size: 29.500px; padding-left: 4px; }
.qp-last { width: 116px; }
.qp-chg { width: 111px; }
.qp-chg, .qp-pct { white-space: nowrap; }

.book { padding: 0 5px 0 3px; }
.b-row { display: grid; grid-template-columns: 100px 60px 1fr; height: 27px; line-height: 27px; }
.b-row small { font-size: 20px; }
.midline { height: 2px; background: linear-gradient(90deg, #8c6a1e 68px, #27598f 68px); margin-top: 0; }
.book-buy { padding-top: 1px; border-bottom: 2px solid #b00000; height: 139px; }
.up { color: #00e000; }
.down { color: #ff2e2e; }
.gray { color: #bcbcbc; }
.dim { color: #8c8c8c; }
.purple { color: #b414b4; }
.vol { color: #c4c400; }

.stats { padding: 0 5px 0 3px; border-bottom: 2px solid #8c0000; }
.stats-a { height: 146px; padding-top: 2px; }
.stats-b { height: 93px; padding-top: 2px; }
.s-row { display: grid; grid-template-columns: 100px 60px 55px 1fr; height: 28.400px; line-height: 28.400px; white-space: nowrap; }
.s2 { padding-left: 8px; }

.flows { padding: 2px 5px 0 3px; height: 120px; border-bottom: 2px solid #8c0000; }
.f-row { display: grid; grid-template-columns: 138px 45px 84px 60px; height: 28.600px; line-height: 28.600px; align-items: center; white-space: nowrap; }
.fbar { display: block; height: 11px; }
.fb-g36 { width: 36px; background: #00e400; }
.fb-g6 { width: 6px; background: #00e400; }
.fb-r33 { width: 33px; background: #ff3030; }
.fb-r29 { width: 29px; background: #ff3030; }

.trades { padding: 0 5px 0 3px; }
.t-row { display: grid; grid-template-columns: 55px 100px 93px 50px 29px; height: 27px; line-height: 27px; }
.t-row b:first-child { text-align: left; }
.t-row b:nth-child(4) { text-align: center; font-size: 20px; }

/* side tools */
.sidetools { width: 37px; flex: none; background: #f1f1f1; border-left: 2px solid #b0b0b0; display: flex; flex-direction: column; align-items: center; }
.st { height: 34.500px; width: 33px; flex: none; display: flex; align-items: center; justify-content: center; }
.st:first-child { margin-top: -2px; }
.st svg { width: 24px; height: 24px; overflow: hidden; }
.st-sep { width: 30px; height: 13px; flex: none; position: relative; border-bottom: 1px solid #b8b8b8; transform: translateY(-6px); }
.arr { fill: #fff; stroke: #4a98ec; stroke-width: 1.600; }
.box { fill: #fff; stroke: #5c9eec; stroke-width: 1.800; }
.box-strong { stroke: #2f8fe8; }
.box-teal { fill: #fff; stroke: #2a8f8a; stroke-width: 1.800; }
.st-f { font: 400 11.500px "Liberation Sans", sans-serif; fill: #2a56c8; }
.st-zi { font: 400 14px "Noto Sans CJK SC", sans-serif; fill: #f0783a; }
.st-fx { font: italic 400 11px "Liberation Serif", serif; fill: #2238c8; }
.st-s { font: 700 17px "Liberation Sans", sans-serif; fill: #c8342c; }
.st-rsi { font: 700 14px "Liberation Sans", sans-serif; color: #3448c0; }
.st-txt { color: #2a5ab8; font-size: 17px; font-family: "Liberation Sans", "Noto Sans CJK SC", sans-serif; }
.st-on { background: #f8f8f8; border: 1px solid #ccc; border-right-color: #fff; border-bottom-color: #fff; }

/* status bar */
.statusbar { height: 36px; flex: none; background: #f6f6f6; border-top: 1px solid #d0d0d0; display: flex; align-items: center; color: #333; white-space: nowrap; padding-top: 1px; }
.sb-icon { width: 20px; height: 24px; margin: 0 2px; flex: none; }
.idx { display: grid; grid-template-columns: 55px 95px 81px 86px 95px; align-items: center; flex: none; }
.idx span { font-size: 24px; color: #333; line-height: 30px; }
.idx b { font-size: 21px; font-weight: 400; color: #0a7d0a; -webkit-text-stroke: .35px #0a7d0a; }
.idx strong, .sb-tail strong { font-size: 21px; font-weight: 700; color: #111; }
.idx em, .sb-tail em { font-size: 24px; font-weight: 400; color: #333; }
.sb-tail { display: flex; align-items: center; }
.sb-tail span { font-size: 20px; }
.sb-tail strong { margin: 0 27px 0 25px; }
.sb-site { margin-left: 380px; }

/* banner */
.banner {
  position: absolute;
  left: 1080px;
  top: 1286px;
  width: 1080px;
  height: 109px;
  background: rgba(127, 171, 216, .96);
  display: flex;
  align-items: center;
}
.banner-cn {
  position: absolute;
  left: 18px;
  top: 7px;
  font-family: "Noto Sans CJK SC", sans-serif;
  font-weight: 900;
  font-size: 76px;
  line-height: 90px;
  color: #1a0a8c;
  white-space: nowrap;
}
.banner-logo { position: absolute; left: 433px; top: 1px; width: 106px; height: 106px; }
.banner-arc { font: 700 7px "Liberation Sans", sans-serif; fill: #fff; }
.banner-url {
  position: absolute;
  left: 578px;
  top: 2px;
  font-family: "DejaVu Serif", serif;
  font-weight: 700;
  font-size: 76px;
  line-height: 90px;
  letter-spacing: -1px;
  color: #fff;
  white-space: nowrap;
  transform: scaleX(.925);
  transform-origin: left center;
}

/* chart svg */
.grid line { stroke: #a80000; stroke-width: 1; stroke-dasharray: 1.500 4.500; }
.l-red { stroke: #e01818; stroke-width: 1.500; }
.l-yellow { stroke: #dcdc00; stroke-width: 1.500; }
.l-yellow2 { stroke: #e8e800; stroke-width: 2; }
.l-green { stroke: #00e000; stroke-width: 2; }
.l-olive { stroke: #7c7c10; stroke-width: 1.500; }
.l-greendash { stroke: #109010; stroke-width: 1.500; stroke-dasharray: 3 9; }
.l-gray { stroke: #8a8a8a; stroke-width: 5; }
.l-lightgray { stroke: #bdbdbd; stroke-width: 1.500; }
.l-magenta { stroke: #c000c0; stroke-width: 2; }
.l-thickgreen { stroke: #10e010; stroke-width: 3; }
.axis { stroke: #b00000; stroke-width: 2; }
.axis-thick { stroke: #b00000; stroke-width: 3; }
.ticks path { stroke: #a00000; fill: none; }
.lab { font-size: 18px; font-family: "Liberation Sans", "Noto Sans CJK SC", sans-serif; }
.c-red { fill: #f01010; }
.c-yellow { fill: #e8e800; }
.c-white { fill: #e0e0e0; }
.c-cyan { fill: #55f0f0; }
.c-green { fill: #00e000; }
.c-gray { fill: #a8a8a8; }
.pointer { stroke: #b0b0b0; stroke-width: 1.200; fill: none; }
.axis-labels text { fill: #d82020; font-size: 18px; text-anchor: end; }
.tag-blue { fill: #1a4a86; }
.tag-green { fill: #0e7c20; }
.tag-red { fill: #8a0a0a; }
.tagtext { font-size: 16px; fill: #f0f0f0; font-family: "Noto Sans CJK SC", sans-serif; }
.tag-narrow { font-size: 15px; }
.ma { fill: none; stroke-width: 1.500; stroke-linejoin: round; }
.ma5 { stroke: #e4e400; }
.ma10 { stroke: #d400d4; }
.hover-box { fill: #00008a; stroke: #b00000; stroke-width: 1.500; }
.hover-text { fill: #c8c8e0; font-size: 17.500px; }
.x10-box { fill: #000; stroke: #a00000; }
.x10-text { fill: #c04040; font-size: 17px; }
.date-ticks { stroke: #b00000; fill: none; }
.date-box { fill: #12128c; stroke: #3030a0; }
.date-red { fill: #e02020; font-size: 18px; }
.date-gray { fill: #b8b8c8; font-size: 17px; }
```

FILE: script.js
```js
var NS = 'http://www.w3.org/2000/svg';
function el(parent, name, attrs) {
  var n = document.createElementNS(NS, name);
  for (var k in attrs) n.setAttribute(k, attrs[k]);
  parent.appendChild(n);
  return n;
}
var RED = '#ff3232', CYAN = '#55ffff', WHITE = '#d0d0d0';
function cx(i) { return Math.round(6.9 + 12.845 * i) + 0.5; }
function py(z) { return Math.round(90 + z / 2.376); }
function vy(z) { return Math.round(720 + z / 2.8); }

/* [type, wick top, body top, body bottom, wick bottom], traced from the chart */
var C = [
['r',1395,1418,1452,1452],['r',1246,1246,1420,1420],['r',1145,1160,1252,1318],['c',1100,1123,1150,1180],
['r',1138,1160,1170,1190],['r',1118,1153,1170,1172],['r',1080,1096,1146,1146],['c',1052,1085,1085,1140],
['c',1092,1106,1157,1186],['c',1138,1138,1176,1182],['c',1163,1163,1170,1222],['c',1152,1152,1170,1186],
['r',1032,1135,1172,1182],['r',1042,1114,1140,1170],['r',1078,1110,1125,1126],['c',1102,1108,1178,1196],
['c',1184,1184,1238,1240],['r',1160,1182,1240,1255],['c',1140,1145,1212,1214],['c',1188,1227,1320,1325],
['r',1240,1267,1314,1318],['c',1230,1270,1290,1297],['c',1290,1330,1355,1362],['c',1373,1373,1390,1430],
['c',1376,1384,1394,1415],['r',1330,1370,1393,1440],['c',1358,1384,1397,1408],['r',1395,1400,1400,1415],
['r',1360,1366,1400,1415],['r',1352,1366,1376,1395],['c',1352,1356,1377,1390],['c',1380,1387,1415,1418],
['r',1397,1398,1418,1418],['r',1380,1392,1403,1410],['r',1367,1367,1386,1390],['c',1348,1356,1380,1397],
['r',1203,1203,1393,1393],['r',1063,1132,1187,1195],['w',932,932,932,1025],['r',711,711,954,980],
['c',496,646,673,723],['c',600,749,781,785],['c',742,782,813,848],['c',785,817,880,912],
['r',657,697,840,866],['r',682,721,797,815],['r',568,692,692,696],['c',645,707,727,734],
['r',617,664,676,695],['r',486,551,665,665],['r',290,290,558,710],['c',18,290,395,424],
['r',165,280,468,541],['r',103,184,337,355],['c',132,211,305,313],['c',315,361,423,430],
['r',322,423,468,530],['c',357,443,470,520],['c',440,505,508,515],['c',500,528,631,645],
['r',582,647,658,688],['r',557,601,643,645],['c',443,443,545,570],['r',425,511,547,574],
['c',543,546,770,770],['r',672,686,830,833],['r',545,672,687,706],['r',543,568,651,651],
['c',543,567,630,632],['r',558,597,632,675],['c',565,596,668,690],['r',487,575,677,680],
['r',370,458,603,648],['c',443,458,635,640],['c',655,675,708,735],['c',675,710,816,830],
['r',775,828,840,850],['c',810,856,880,900],['c',850,881,1001,1001],['c',992,1017,1032,1098],
['c',955,988,1118,1118],['r',1032,1073,1083,1104],['c',1006,1042,1075,1094],['r',1042,1067,1075,1095],
['r',1060,1064,1097,1112],['c',1062,1078,1127,1137],['c',1138,1141,1198,1200],['r',1165,1196,1222,1222],
['w',1185,1196,1196,1222],['r',1156,1177,1185,1205],['c',1165,1177,1190,1200],['r',1155,1174,1190,1200],
['r',978,978,1160,1160],['r',775,840,982,1015],['c',855,878,893,905],['c',870,918,979,1032],
['r',955,963,992,994],['c',942,942,965,1012],['c',965,967,980,1002],['r',928,957,996,1018],
['c',906,975,977,983],['c',910,975,975,990],['c',980,992,1033,1040],['c',1012,1027,1105,1130],
['r',1072,1096,1096,1235],['r',985,996,1079,1079],['r',948,950,1018,1030],['r',738,864,921,950],
['c',880,900,1041,1041],['r',970,997,1010,1105],['r',892,957,986,998],['r',905,921,943,965],
['r',848,871,893,925],['c',917,995,1015,1030],['r',948,982,1040,1040],['r',887,902,1007,1015],
['c',885,917,936,942],['c',980,1006,1061,1087],['r',912,946,1060,1068],['c',912,950,958,1014],
['c',917,953,987,990],['c',1003,1017,1043,1058],['c',995,1010,1078,1090],['r',1088,1110,1125,1165],
['c',1105,1120,1140,1160],['r',995,1035,1115,1135],['r',825,825,1015,1095],['c',695,792,805,820],
['r',740,771,807,845],['c',725,806,827,827]
];

var gDots = document.getElementById('dots');
var gCandles = document.getElementById('candles');
var gX = document.getElementById('xmarks');

for (var i = 0; i < 130; i++) {
  var x = cx(i);
  el(gDots, 'ellipse', { cx: x, cy: 582, rx: 3.4, ry: 2.8, fill: '#fff' });
  if (i <= 41) el(gDots, 'ellipse', { cx: x + 3, cy: 696, rx: 3, ry: 3, fill: '#f0f000' });
  if (i >= 125) el(gDots, 'ellipse', { cx: x, cy: 696, rx: 3, ry: 3, fill: '#f0f000' });
  if (i >= 70) {
    el(gX, 'path', { d: 'M' + (x - 3) + ' 241l6 6m0-6l-6 6', stroke: '#d02020', fill: 'none' });
    el(gX, 'path', { d: 'M' + (x - 3) + ' 606l6 6m0-6l-6 6', stroke: '#c000c0', fill: 'none' });
  }
}

C.forEach(function (c, i) {
  var x = cx(i), t = c[0];
  var col = t === 'r' ? RED : t === 'c' ? CYAN : WHITE;
  var wt = py(c[1]), bt = py(c[2]), bb = py(c[3]), wb = py(c[4]);
  el(gCandles, 'line', { x1: x, x2: x, y1: wt, y2: wb, stroke: col, 'stroke-width': t === 'w' ? 1.5 : 1.4 });
  if (t === 'w') {
    el(gCandles, 'rect', { x: x - 4, y: bt - 1, width: 8, height: 2, fill: col });
  } else if (bb - bt < 2) {
    el(gCandles, 'rect', { x: x - 5, y: bt - 1, width: 10, height: 2, fill: col });
  } else {
    el(gCandles, 'rect', {
      x: x - 4.5, y: bt + 0.5, width: 9, height: bb - bt - 1,
      fill: t === 'r' ? '#000' : col, stroke: col, 'stroke-width': 1.5
    });
  }
});

/* volume: colour letter and bar top */
var V = 'r1352 r1065 r1023 c1165 r1293 r1330 r1196 c1252 c1287 c1350 c1328 c1412 r1200 r1309 r1347 c1353 c1378 r1358 c1355 c1273 r1326 c1365 c1340 c1337 c1392 r1178 c1337 r1422 r1343 r1363 c1412 c1395 r1451 r1427 r1396 c1408 r1145 r750 r540 r296 c130 c405 c748 c908 r456 r930 r851 c1076 r1073 r724 r548 c203 r400 r510 c800 c900 r892 c992 c1190 c1051 r1144 r1153 c1093 r1052 c883 r1107 r1103 r1145 c1190 r1204 c1237 r938 r858 c1000 c1248 c1256 r1335 c1295 c1295 c1215 c1299 r1342 c1383 r1372 r1354 c1322 c1346 r1410 c1421 r1397 c1395 r1352 r1052 r901 c1182 c1114 r1310 c1370 c1400 r1338 c1316 c1342 c1388 c1312 r1313 r1297 r1212 r964 c1157 r1238 r1208 r1297 r1187 c1094 r1222 r1140 c1253 c1279 r1187 c1291 c1316 c1321 c1324 r1360 c1400 r1200 r880 c811 r1145 c1253'.split(' ');
var gBars = document.getElementById('bars');
V.forEach(function (v, i) {
  var x = cx(i), red = v[0] === 'r', top = vy(+v.slice(1));
  el(gBars, 'rect', {
    x: x - 4.5, y: top + 0.5, width: 9, height: 1272 - top - 1,
    fill: red ? '#000' : CYAN, stroke: red ? RED : CYAN, 'stroke-width': 1.5
  });
});

/* moving averages: traced points, x in two chart segments */
function toPts(a, xoff) {
  var out = [];
  for (var k = 0; k < a.length; k += 2) out.push((xoff + a[k] / 1.742).toFixed(1) + ',' + (720 + a[k + 1] / 2.8).toFixed(1));
  return out;
}
var y1 = [10,1385,30,1320,55,1240,80,1195,100,1178,122,1173,145,1205,168,1248,190,1272,210,1283,232,1283,260,1327,280,1318,340,1325,365,1318,390,1352,415,1360,450,1338,490,1337,525,1330,547,1355,570,1327,592,1318,615,1335,655,1330,683,1378,705,1390,727,1392,750,1410,772,1418,795,1413,817,1340,840,1190,862,1050,884,820,907,590,930,423,952,423,973,490,995,525,1018,690,1040,770,1065,845,1086,885,1108,930,1130,860,1153,740,1175,600,1198,478,1221,493,1243,560,1266,680,1287,820,1310,950,1332,1005,1355,1060,1378,1110,1399,1127,1423,1100,1444,1067,1467,1055,1488,1048,1512,1057,1535,1085];
var y2 = [22,1150,46,1175,68,1140,91,1085,112,1048,135,1055,158,1060,180,1130,203,1215,225,1290,248,1280,270,1285,292,1293,315,1310,337,1325,360,1352,381,1353,404,1355,426,1365,448,1370,471,1380,494,1393,516,1393,538,1300,561,1215,582,1170,606,1120,628,1112,650,1175,674,1275,695,1305,717,1340,739,1353,763,1357,786,1338,806,1333,830,1330,852,1305,875,1220,896,1190,919,1172,943,1157,964,1173,987,1220,1008,1205,1032,1205,1052,1190,1076,1180,1100,1205,1121,1217,1144,1230,1165,1268,1188,1280,1210,1287,1233,1325,1256,1343,1278,1325,1300,1240,1322,1120,1345,1085,1366,1060];
var m1 = [0,1360,22,1330,55,1300,80,1290,100,1285,125,1277,170,1240,190,1234,232,1228,260,1267,300,1297,345,1305,390,1335,415,1338,480,1325,545,1352,592,1325,615,1335,650,1335,705,1355,750,1372,772,1372,797,1400,817,1378,840,1300,862,1220,884,1130,907,1000,930,870,960,800,975,760,995,670,1018,630,1040,603,1065,635,1086,685,1108,725,1130,775,1153,757,1175,715,1198,680,1221,713,1243,708,1266,712,1287,704,1310,717,1332,760,1355,820,1378,920,1399,985,1423,1028,1444,1040,1467,1058,1488,1080,1512,1095,1535,1095];
var m2 = [22,1108,46,1115,68,1095,91,1073,112,1070,135,1103,158,1120,180,1140,203,1158,225,1165,248,1170,270,1175,292,1215,315,1265,337,1305,360,1318,381,1323,404,1325,426,1335,448,1348,471,1363,494,1376,516,1377,538,1335,561,1295,582,1280,606,1258,628,1255,650,1250,674,1247,695,1240,717,1233,739,1233,763,1265,786,1312,806,1320,830,1338,852,1328,875,1288,896,1265,919,1255,943,1242,964,1238,987,1210,1008,1195,1032,1185,1052,1170,1076,1175,1100,1207,1121,1213,1144,1218,1165,1228,1188,1228,1210,1245,1233,1272,1256,1288,1278,1292,1300,1250,1322,1210,1345,1203,1366,1200];
document.getElementById('ma5').setAttribute('points', toPts(y1, 0).concat(toPts(y2, 880)).join(' '));
document.getElementById('ma10').setAttribute('points', toPts(m1, 0).concat(toPts(m2, 880)).join(' '));
```
